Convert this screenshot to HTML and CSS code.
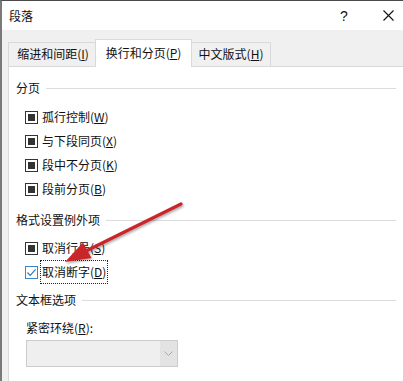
FILE: index.html
```html
<!DOCTYPE html>
<html>
<head>
<meta charset="UTF-8">
<title>段落</title>
<link rel="stylesheet" href="styles.css">
</head>
<body>

<div class="dialog">
    <div class="titlebar">
        <span class="title">段落</span>
        <span class="help">?</span>
        <span class="close">
            <svg width="11" height="11" viewBox="0 0 11 11"><path d="M0.5 0.5L10.5 10.5M10.5 0.5L0.5 10.5" stroke="#111" stroke-width="1.1" fill="none"/></svg>
        </span>
    </div>

    <div class="tabs">
        <div class="tab tab-1">缩进和间距(<u>I</u>)</div>
        <div class="tab tab-2 on">换行和分页(<u>P</u>)</div>
        <div class="tab tab-3">中文版式(<u>H</u>)</div>
    </div>

    <div class="panel">
        <div class="group-head"><span>分页</span><i></i></div>
        <div class="row"><span class="box mixed"></span><span class="label">孤行控制(<u>W</u>)</span></div>
        <div class="row"><span class="box mixed"></span><span class="label">与下段同页(<u>X</u>)</span></div>
        <div class="row"><span class="box mixed"></span><span class="label">段中不分页(<u>K</u>)</span></div>
        <div class="row"><span class="box mixed"></span><span class="label">段前分页(<u>B</u>)</span></div>

        <div class="group-head g2"><span>格式设置例外项</span><i></i></div>
        <div class="row"><span class="box mixed"></span><span class="label">取消行号(<u>S</u>)</span></div>
        <div class="row"><span class="box checked">
            <svg width="11" height="11" viewBox="0 0 11 11"><path d="M1.5 5.5L4.2 8.3L9.6 2.4" stroke="#2f7bbf" stroke-width="1.2" fill="none"/></svg>
        </span><span class="label focus">取消断字(<u>D</u>)</span></div>

        <div class="group-head g3"><span>文本框选项</span><i></i></div>
        <div class="field-label">紧密环绕(<u>R</u>):</div>
        <div class="select">
            <span class="value"></span>
            <span class="arrow">
                <svg width="9" height="5" viewBox="0 0 9 5"><path d="M0.5 0.5L4.5 4.5L8.5 0.5" stroke="#a8a8a8" stroke-width="1" fill="none"/></svg>
            </span>
        </div>
    </div>

    <!-- 标注箭头 -->
    <svg class="mark" width="403" height="381" viewBox="0 0 403 381">
        <defs>
            <filter id="sh" x="-20%" y="-20%" width="140%" height="140%">
                <feDropShadow dx="1" dy="1.5" stdDeviation="1.2" flood-color="#000" flood-opacity="0.35"/>
            </filter>
        </defs>
        <g filter="url(#sh)">
            <path d="M181 204L86 251" stroke="#c9262a" stroke-width="3.2" stroke-linecap="round" fill="none"/>
            <path d="M65 262L83 242.5L91.5 258Z" fill="#c9262a"/>
        </g>
    </svg>
</div>

</body>
</html>
```

FILE: styles.css
```css
* {
    margin: 0;
    padding: 0;
    box-sizing: border-box;
}

body {
    margin: 0;
    width: 403px;
    height: 381px;
    overflow: hidden;
    background: #fff;
    font-family: "Noto Sans CJK SC", "Microsoft YaHei", sans-serif;
    font-size: 12px;
    color: #111;
}

u {
    text-decoration: underline;
    text-underline-offset: 1px;
}

.dialog {
    position: relative;
    height: 381px;
    border-top: 1px solid #4a4a4a;
    border-left: 2px solid #7a7a7a;
    background: #f0f0f0;
}

.titlebar {
    display: flex;
    align-items: center;
    height: 29px;
    padding-left: 7px;
    background: #fff;
}

.titlebar .title {
    flex: 1;
}

.titlebar .help {
    width: 12px;
    margin-right: 31px;
    font-family: "Liberation Sans", sans-serif;
    font-size: 14px;
}

.titlebar .close {
    display: flex;
    margin-right: 9px;
}

.tabs {
    display: flex;
    align-items: flex-end;
    height: 36px;
    padding-left: 6px;
}

.tab {
    height: 24px;
    line-height: 22px;
    text-align: center;
    border: 1px solid #d9d9d9;
    border-bottom: none;
    background: #f0f0f0;
}

.tab-1 {
    width: 88px;
    padding-left: 2px;
}

.tab-2 {
    width: 97px;
    margin-left: -1px;
}

.tab-3 {
    width: 80px;
    margin-left: -1px;
}

.tab.on {
    position: relative;
    z-index: 1;
    height: 28px;
    line-height: 25px;
    margin-bottom: -1px;
    background: #fff;
}

.panel {
    height: 320px;
    margin-left: 6px;
    padding: 0 7px 0 7px;
    border-top: 1px solid #d9d9d9;
    border-left: 1px solid #d9d9d9;
    background: #fff;
}

.group-head {
    display: flex;
    align-items: center;
    height: 16px;
    margin-top: 13px;
    line-height: 16px;
}

.group-head i {
    flex: 1;
    height: 1px;
    margin-left: 6px;
    background: #dcdcdc;
}

.group-head.g2 {
    margin-top: 11px;
}

.group-head.g3 {
    margin-top: 8px;
}

.group-head + .row {
    margin-top: 9px;
}

.group-head.g2 + .row {
    margin-top: 8px;
}

.row {
    display: flex;
    align-items: center;
    height: 24px;
    padding-left: 9px;
}

.box {
    display: flex;
    align-items: center;
    justify-content: center;
    width: 13px;
    height: 13px;
    margin-right: 2px;
    border: 1px solid #333;
    background: #fff;
}

.box.mixed::after {
    content: "";
    width: 7px;
    height: 7px;
    background: #333;
}

.box.checked {
    border-color: #3d87c6;
}

.label {
    height: 24px;
    line-height: 22px;
    padding: 0 1px;
    border: 1px dotted transparent;
}

.label.focus {
    border-color: #222;
}

.field-label {
    margin-top: 12px;
    margin-left: 10px;
    line-height: 16px;
}

.select {
    display: flex;
    width: 152px;
    height: 27px;
    margin-top: 4px;
    margin-left: 10px;
    border: 1px solid #cccccc;
    background: #efefef;
}

.select .value {
    flex: 1;
}

.select .arrow {
    display: flex;
    align-items: center;
    justify-content: center;
    width: 17px;
    background: #e3e3e3;
}

.mark {
    position: absolute;
    top: -1px;
    left: -2px;
    z-index: 5;
    pointer-events: none;
}
```
